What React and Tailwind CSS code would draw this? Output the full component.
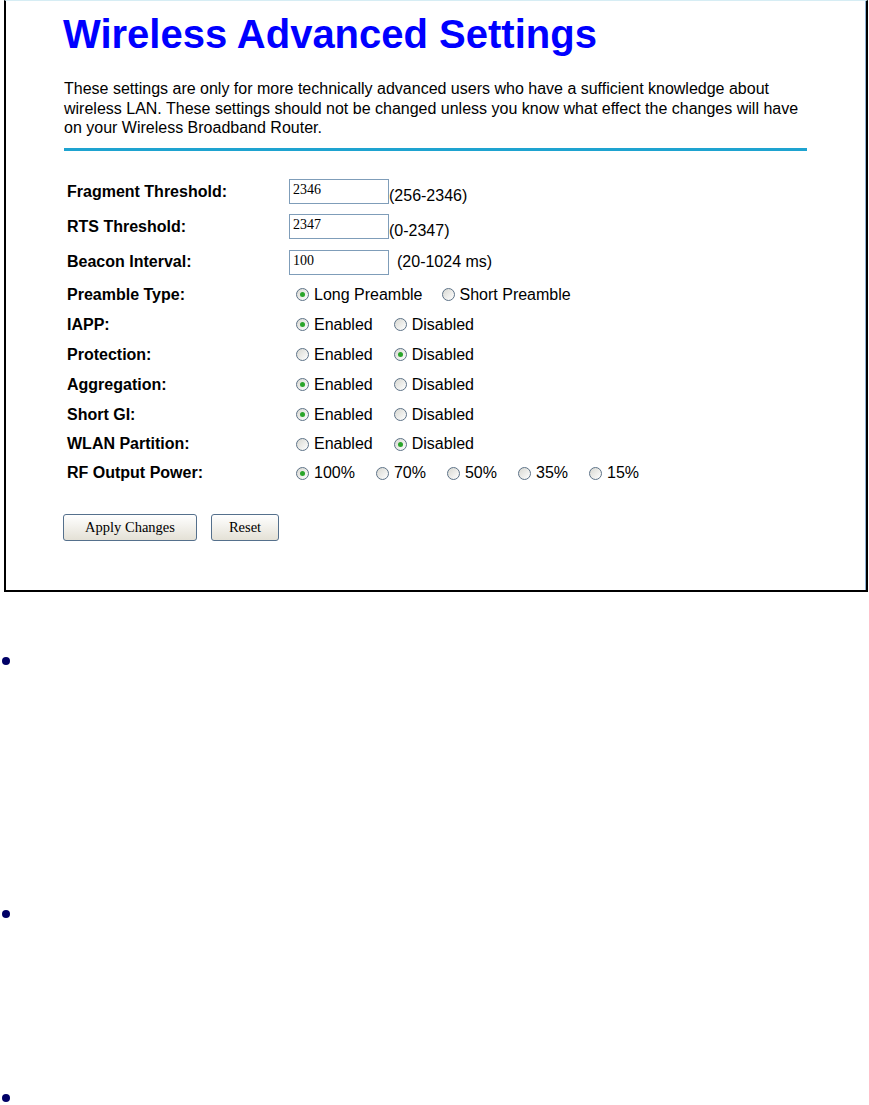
import React from "react";

const sans = { fontFamily: '"Liberation Sans", Arial, sans-serif' };

function Radio({ checked, label }) {
  return (
    <span className="flex items-center">
      <span className="w-[13px] h-[13px] rounded-full border border-[#5d7287] bg-gradient-to-br from-[#d8d8d2] to-white flex items-center justify-center">
        {checked && <span className="w-[5px] h-[5px] rounded-full bg-[#2aa52a]" />}
      </span>
      <span className="ml-[5px] text-[16px] leading-none">{label}</span>
    </span>
  );
}

function Field({ value, range, pad }) {
  return (
    <div className="flex items-center">
      <div className="w-[100px] h-[25px] border border-[#7f9db9] bg-white pl-[3px] pt-[3px] font-['Liberation_Serif'] text-[14px] leading-none">
        {value}
      </div>
      <span className={`text-[16px] leading-none ${pad}`}>{range}</span>
    </div>
  );
}

function Row({ label, h, children }) {
  return (
    <div className={`flex items-center ${h}`}>
      <div className="w-[222px] font-bold text-[16px] leading-none">{label}</div>
      <div className="flex items-center">{children}</div>
    </div>
  );
}

function EnDis({ on }) {
  return (
    <div className="ml-[7px] flex items-center gap-[21px]">
      <Radio checked={on} label="Enabled" />
      <Radio checked={!on} label="Disabled" />
    </div>
  );
}

function Button({ w, children }) {
  return (
    <div
      className={`${w} h-[27px] rounded-[3px] border border-[#55708c] bg-gradient-to-b from-white to-[#e4e1d6] flex items-center justify-center font-['Liberation_Serif'] text-[14.5px] leading-none`}
    >
      {children}
    </div>
  );
}

export default function App() {
  return (
    <div className="w-[869px] min-h-[1105px] bg-white text-black" style={sans}>
      <div className="ml-[4px] w-[864px] h-[592px] border-t border-t-[#d6edf4] border-l-2 border-b-2 border-r-2 border-black">
        <div className="h-full border-r border-[#8fb3d3] pl-[57px] pt-[13px]">
          <h1 className="text-[40px] font-bold leading-none text-[#0000ff]">Wireless Advanced Settings</h1>
          <p className="mt-[25px] ml-[1px] w-[745px] text-[16px] leading-[19.5px]">
            These settings are only for more technically advanced users who have a sufficient knowledge about
            wireless LAN. These settings should not be changed unless you know what effect the changes will have
            on your Wireless Broadband Router.
          </p>
          <div className="mt-[10px] ml-[1px] w-[743px] h-[3px] bg-[#1ea3d0]" />
          <div className="mt-[24px] ml-[4px]">
            <Row label="Fragment Threshold:" h="h-[34px]">
              <Field value="2346" range="(256-2346)" pad="pt-[9px]" />
            </Row>
            <Row label="RTS Threshold:" h="h-[36px]">
              <Field value="2347" range="(0-2347)" pad="pt-[9px]" />
            </Row>
            <Row label="Beacon Interval:" h="h-[35px]">
              <Field value="100" range="(20-1024 ms)" pad="pl-[8px]" />
            </Row>
            <Row label="Preamble Type:" h="h-[30px]">
              <div className="ml-[7px] flex items-center gap-[19px]">
                <Radio checked label="Long Preamble" />
                <Radio label="Short Preamble" />
              </div>
            </Row>
            <Row label="IAPP:" h="h-[30px]">
              <EnDis on />
            </Row>
            <Row label="Protection:" h="h-[30px]">
              <EnDis on={false} />
            </Row>
            <Row label="Aggregation:" h="h-[30px]">
              <EnDis on />
            </Row>
            <Row label="Short GI:" h="h-[30px]">
              <EnDis on />
            </Row>
            <Row label="WLAN Partition:" h="h-[29px]">
              <EnDis on={false} />
            </Row>
            <Row label="RF Output Power:" h="h-[29px]">
              <div className="ml-[7px] flex items-center gap-[21px]">
                <Radio checked label="100%" />
                <Radio label="70%" />
                <Radio label="50%" />
                <Radio label="35%" />
                <Radio label="15%" />
              </div>
            </Row>
          </div>
          <div className="mt-[26px] flex gap-[14px]">
            <Button w="w-[134px]">Apply Changes</Button>
            <Button w="w-[68px]">Reset</Button>
          </div>
        </div>
      </div>
      <div className="ml-[2px]">
        <div className="mt-[65px] w-[8px] h-[8px] rounded-full bg-[#000066]" />
        <div className="mt-[245px] w-[8px] h-[8px] rounded-full bg-[#000066]" />
        <div className="mt-[176px] w-[8px] h-[8px] rounded-full bg-[#000066]" />
      </div>
    </div>
  );
}
